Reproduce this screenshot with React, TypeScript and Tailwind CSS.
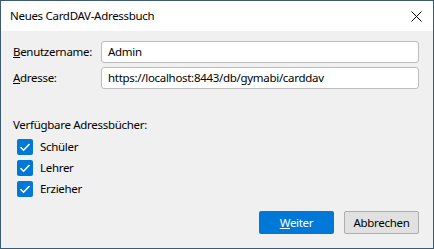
import React from "react";

function Check({ label }: { label: string }) {
  return (
    <div className="flex items-center h-[21px]">
      <div className="w-[16px] h-[16px] rounded-[2px] bg-[#0078d7] flex items-center justify-center ml-[4px]">
        <svg width="12" height="12" viewBox="0 0 12 12">
          <path d="M1.5 6.2 L4.6 9.2 L10.5 3" fill="none" stroke="white" strokeWidth="1.6" />
        </svg>
      </div>
      <span className="ml-[7px]">{label}</span>
    </div>
  );
}

export default function App() {
  return (
    <div
      className="w-[434px] h-[249px] border border-[#3c5a72] bg-[#f0f0f0] flex flex-col text-[11.5px] tracking-[-0.3px] text-black"
      style={{ fontFamily: '"Segoe UI", "Noto Sans", sans-serif' }}
    >
      <div className="h-[30px] bg-white flex items-center justify-between pl-[9px] pr-[11px]">
        <span>Neues CardDAV-Adressbuch</span>
        <svg width="11" height="11" viewBox="0 0 11 11">
          <path d="M0.5 0.5 L10.5 10.5 M10.5 0.5 L0.5 10.5" stroke="#000" strokeWidth="1" />
        </svg>
      </div>
      <div className="flex-1 flex flex-col pl-[12px] pr-[14px] pt-[10px]">
        <div className="flex items-center h-[22px]">
          <span className="w-[88px]"><span className="underline">B</span>enutzername:</span>
          <div className="flex-1 h-[22px] bg-white border border-[#bcbcbc] rounded-[3px] flex items-center px-[6px]">Admin</div>
        </div>
        <div className="flex items-center h-[22px] mt-[4px]">
          <span className="w-[88px]"><span className="underline">A</span>dresse:</span>
          <div className="flex-1 h-[22px] bg-white border border-[#bcbcbc] rounded-[3px] flex items-center px-[6px]">https://localhost:8443/db/gymabi/carddav</div>
        </div>
        <div className="mt-[27px] h-[18px] flex items-center">Verfügbare Adressbücher:</div>
        <div className="flex flex-col mt-[2px]">
          <Check label="Schüler" />
          <Check label="Lehrer" />
          <Check label="Erzieher" />
        </div>
        <div className="flex justify-end gap-[10px] mt-[12px]">
          <button className="w-[75px] h-[23px] bg-[#0078d7] text-white rounded-[2px] flex items-center justify-center">
            <span><span className="underline">W</span>eiter</span>
          </button>
          <button className="w-[75px] h-[23px] bg-[#e1e1e1] border border-[#adadad] rounded-[2px] flex items-center justify-center">
            Abbrechen
          </button>
        </div>
      </div>
    </div>
  );
}
